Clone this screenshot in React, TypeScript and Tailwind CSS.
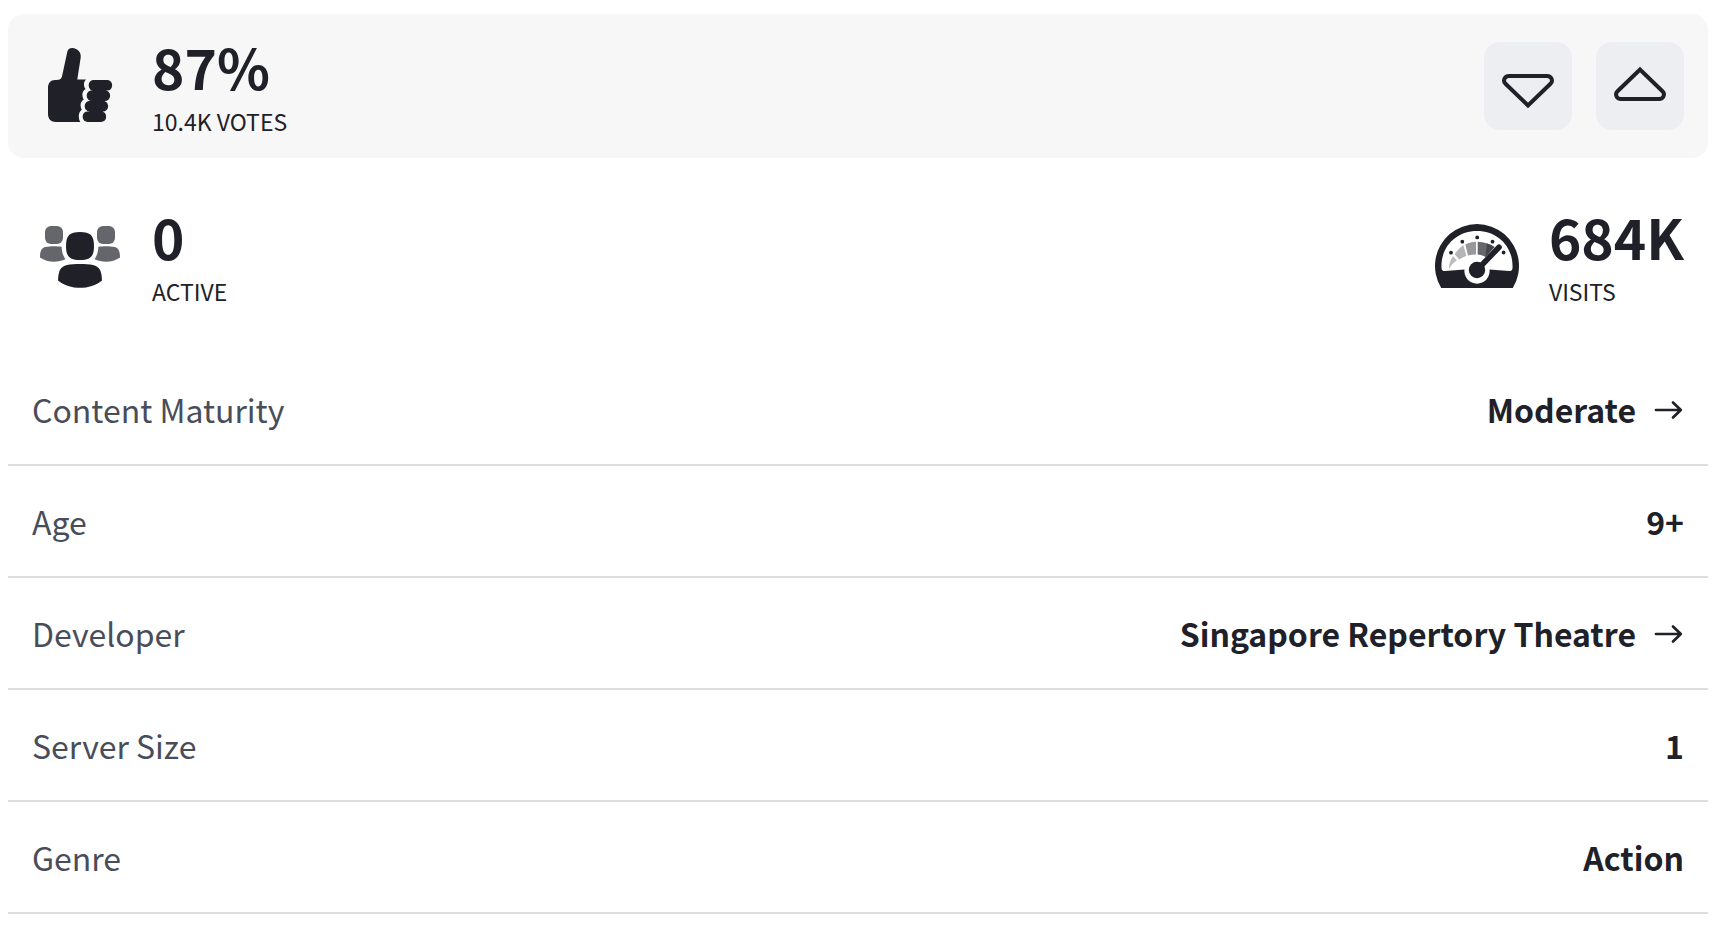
import type { ReactNode } from 'react';

function ThumbsUpIcon() {
  return (
    <svg viewBox="0 0 96 96" className="size-24 shrink-0" fill="currentColor" aria-hidden="true">
      <path d="M23 42C27.5 42 29.4 41.5 30.2 37.5L35.2 14.2C35.8 11.4 37.6 10 40.2 10C45.8 10.4 49.3 14.2 48.7 19.4L45.3 41.6H54C52.4 43.2 52 44.6 52 46.2C52 48.2 52.5 49.8 53.6 51C51.4 52.4 50.4 54.2 50.4 56.4C50.4 58.4 50.8 60 51.8 61.4C49.6 62.8 48.6 64.6 48.6 66.8C48.6 68.8 49 70.6 49.8 71.8C47.8 73.4 46.8 75.4 46.8 78C46.8 80.4 47.2 82.4 48.4 84H24C19 84 16 81 16 76V50C16 45 18.5 42 23 42Z" />
      <rect x="56.7" y="42" width="23.4" height="10.6" rx="5" />
      <rect x="54.7" y="52.2" width="23.4" height="10.8" rx="5.2" />
      <rect x="52.7" y="62.8" width="23.4" height="10.8" rx="5.2" />
      <rect x="50.7" y="73.4" width="23.4" height="10.6" rx="5" />
      <path d="M61 50H74.5L70.5 76H57Z" />
    </svg>
  );
}

function PlayersIcon() {
  return (
    <svg viewBox="0 0 96 96" className="size-24 shrink-0" fill="currentColor" aria-hidden="true">
      <g className="text-[#65666c]">
        <rect x="13" y="18" width="18" height="18" rx="6" />
        <rect x="65" y="18" width="18" height="18" rx="6" />
        <path d="M8 49.5C8 43 9.5 39.8 13.5 39C18 38 25 38 29.5 38.8C30 44 31 48 33.5 51.3C25.5 55 15 54.6 8 49.5Z" />
        <path d="M88 49.5C88 43 86.5 39.8 82.5 39C78 38 71 38 66.5 38.8C66 44 65 48 62.5 51.3C70.5 55 81 54.6 88 49.5Z" />
      </g>
      <path d="M48 24C58.5 24 62 27.5 62 38C62 48.5 58.5 52 48 52C37.5 52 34 48.5 34 38C34 27.5 37.5 24 48 24Z" />
      <path d="M26 72.5C26.4 62.5 28.5 58.5 35 57C42 55.8 54 55.8 61 57C67.5 58.5 69.6 62.5 70 72.5C58 82.3 38 82.3 26 72.5Z" />
    </svg>
  );
}

function GaugeIcon() {
  return (
    <svg viewBox="0 0 96 96" className="size-24 shrink-0" fill="currentColor" aria-hidden="true">
      <path d="M12.2 80A42 42 0 1 1 83.8 80Z" />
      <path
        fill="#fff"
        d="M12.5 60C11.5 39 27 23 48 23C69 23 84.5 39 83.5 60C83.4 62.3 82.2 63.2 80 63.1L60.5 61.5A12.6 12.6 0 1 1 35.5 61.5L16 63.1C13.8 63.2 12.6 62.3 12.5 60Z"
      />
      <path fill="#bcbcbf" d="M19.8 61.5C20 56 21.2 52 24 48.3L28 52.3C24.2 54.6 21.8 57.8 19.8 61.5Z" />
      <path fill="#b5b5b8" d="M25.7 46.2C28 42.5 31 39.6 34.4 37.3L37.4 47.7C34.8 48.7 32.4 50 30.2 51.5Z" />
      <path fill="#97979c" d="M36.3 36.4C39.7 34.8 43.3 34 47 33.8V46.6C44.2 46.6 41.6 46.9 39 47.5Z" />
      <path fill="#66666d" d="M48.7 33.8C55 34 60.5 35.6 65.5 39L56.5 49C54 47.6 51.3 46.8 48.7 46.6Z" />
      <path fill="#45454d" d="M58 35.4C61 36.2 63.3 37.4 65.5 39L56.5 49C57 44.5 57.5 40 58 35.4Z" />
      <circle cx="22" cy="44.7" r="1.9" />
      <circle cx="33.3" cy="33.7" r="1.9" />
      <circle cx="48.2" cy="29.4" r="1.9" />
      <circle cx="63.5" cy="33.7" r="1.9" />
      <circle cx="74.6" cy="44.5" r="1.9" />
      <circle cx="48" cy="62" r="8.2" />
      <path d="M50 60L70 39.2" stroke="currentColor" strokeWidth="5.6" strokeLinecap="round" />
    </svg>
  );
}

function ArrowIcon() {
  return (
    <svg
      viewBox="0 0 32 32"
      className="size-8 shrink-0"
      fill="none"
      stroke="currentColor"
      strokeWidth="2.7"
      strokeLinecap="round"
      strokeLinejoin="round"
      aria-hidden="true"
    >
      <path d="M4 17H28.8M21 9.5L28.8 17L21 24.5" />
    </svg>
  );
}

function VoteButton({ label, path }: { label: string; path: string }) {
  return (
    <button type="button" aria-label={label} className="size-22 rounded-2xl bg-[#edeef2] hover:bg-gray-200">
      <svg viewBox="0 0 88 88" className="size-22" fill="none" stroke="currentColor" strokeWidth="4" aria-hidden="true">
        <path d={path} />
      </svg>
    </button>
  );
}

function Stat({ icon, value, label }: { icon: ReactNode; value: string; label: string }) {
  return (
    <div className="flex items-center gap-6">
      {icon}
      <div>
        <div className="text-[55px] leading-[62px] font-bold">{value}</div>
        <div className="mt-2 text-[23px] leading-8">{label}</div>
      </div>
    </div>
  );
}

const details = [
  { name: 'Content Maturity', value: 'Moderate', link: true },
  { name: 'Age', value: '9+', link: false },
  { name: 'Developer', value: 'Singapore Repertory Theatre', link: true },
  { name: 'Server Size', value: '1', link: false },
  { name: 'Genre', value: 'Action', link: false },
];

export default function App() {
  return (
    <main className='min-h-screen bg-white pt-3.5 pr-2.5 pl-2 font-["Noto_Sans_CJK_SC",sans-serif] text-[#202128]'>
      <section className="flex h-36 items-center justify-between rounded-2xl bg-[#f7f7f7] px-6">
        <Stat icon={<ThumbsUpIcon />} value="87%" label="10.4K VOTES" />
        <div className="flex gap-6">
          <VoteButton
            label="Vote down"
            path="M25 34H63C67.5 34 69.5 38.8 66.5 41.7L44 63.5L21.5 41.7C18.5 38.8 20.5 34 25 34Z"
          />
          <VoteButton
            label="Vote up"
            path="M25 57H63C67.5 57 69.5 52.2 66.5 49.3L44 27.5L21.5 49.3C18.5 52.2 20.5 57 25 57Z"
          />
        </div>
      </section>

      <section className="my-6.5 flex h-36 items-center justify-between px-6">
        <Stat icon={<PlayersIcon />} value="0" label="ACTIVE" />
        <Stat icon={<GaugeIcon />} value="684K" label="VISITS" />
      </section>

      <dl>
        {details.map((item) => (
          <div
            key={item.name}
            className="flex h-28 items-center justify-between border-b-2 border-[#dcdce1] px-6 text-[32px] leading-10"
          >
            <dt className="text-[#494d5a]">{item.name}</dt>
            <dd className="font-bold">
              {item.link ? (
                <a href="#" className="flex items-center gap-4">
                  {item.value}
                  <ArrowIcon />
                </a>
              ) : (
                item.value
              )}
            </dd>
          </div>
        ))}
      </dl>
    </main>
  );
}
